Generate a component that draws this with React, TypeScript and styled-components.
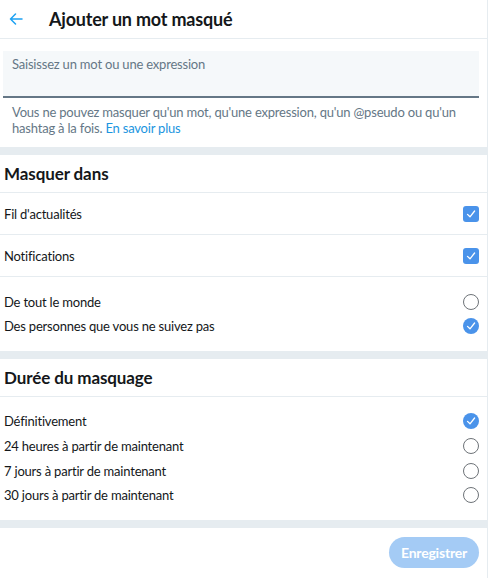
import React from 'react'
import styled, { createGlobalStyle } from 'styled-components'

const GlobalStyle = createGlobalStyle`
  body {
    margin: 0;
    background: #fff;
    font-family: Lato, 'Noto Sans', sans-serif;
    color: #14171a;
  }
`

const BLUE = '#4a93ea'

const Panel = styled.div`
  width: 487px;
  min-height: 578px;
  border-right: 1px solid #e6ecf0;
  background: #fff;
`

const Header = styled.div`
  display: flex;
  align-items: center;
  height: 38px;
  border-bottom: 1px solid #e6ecf0;
`

const BackButton = styled.div`
  width: 49px;
  display: flex;
  padding-left: 9px;
  box-sizing: border-box;
`

const Title = styled.h1`
  margin: 0;
  font-size: 18px;
  font-weight: 700;
  letter-spacing: -0.2px;
`

const InputSection = styled.div`
  height: 108px;
  box-sizing: border-box;
  padding: 12px 8px 0 3px;
`

const InputBox = styled.div`
  height: 47px;
  background: #f5f8fa;
  border-bottom: 2px solid #657786;
  padding: 5px 9px 0;
  box-sizing: border-box;
  font-size: 13px;
  letter-spacing: -0.2px;
  color: #657786;
  line-height: 16px;
`

const Help = styled.p`
  margin: 6px 0 0 9px;
  font-size: 13px;
  letter-spacing: -0.2px;
  line-height: 16px;
  color: #657786;

  a {
    color: #1b95e0;
    text-decoration: none;
  }
`

const Band = styled.div`
  height: 8px;
  background: #e6ecf0;
`

const SectionTitle = styled.h2`
  margin: 0;
  height: 37px;
  display: flex;
  align-items: center;
  padding-left: 4px;
  font-size: 17px;
  font-weight: 700;
  letter-spacing: -0.1px;
  border-bottom: 1px solid #e6ecf0;
`

const CheckRow = styled.div`
  height: 41px;
  display: flex;
  align-items: center;
  justify-content: space-between;
  padding: 0 8px 0 4px;
  border-bottom: 1px solid #e6ecf0;
  font-size: 13px;
  letter-spacing: -0.2px;
`

const RadioGroup = styled.div<{ $pad: number; $row: number }>`
  padding: ${p => p.$pad}px 0;

  & > div {
    height: ${p => p.$row}px;
  }
`

const RadioRow = styled.div`
  display: flex;
  align-items: center;
  justify-content: space-between;
  padding: 0 8px 0 4px;
  font-size: 13px;
  letter-spacing: -0.2px;
`

const Box = styled.span<{ $round?: boolean; $on?: boolean }>`
  width: 16px;
  height: 16px;
  flex: none;
  box-sizing: border-box;
  border-radius: ${p => (p.$round ? '50%' : '3px')};
  background: ${p => (p.$on ? BLUE : '#fff')};
  border: ${p => (p.$on ? 'none' : '1.5px solid #6e7378')};
  display: flex;
  align-items: center;
  justify-content: center;
`

const Footer = styled.div`
  display: flex;
  justify-content: flex-end;
  padding: 9px 8px 0 0;
`

const SaveButton = styled.button`
  width: 90px;
  height: 31px;
  border: none;
  border-radius: 16px;
  background: #a4cbf5;
  color: #fff;
  font-family: Lato, 'Noto Sans', sans-serif;
  font-weight: 700;
  font-size: 14px;
  letter-spacing: -0.2px;
`

const Tick = () => (
  <svg width="10" height="10" viewBox="0 0 10 10">
    <path d="M1.5 5.4 L4 7.8 L8.6 2" fill="none" stroke="#fff" strokeWidth="1.3" strokeLinecap="round" strokeLinejoin="round" />
  </svg>
)

const Control: React.FC<{ round?: boolean; on?: boolean }> = ({ round, on }) => (
  <Box $round={round} $on={on}>{on && <Tick />}</Box>
)

const durations = [
  { label: 'Définitivement', on: true },
  { label: '24 heures à partir de maintenant', on: false },
  { label: '7 jours à partir de maintenant', on: false },
  { label: '30 jours à partir de maintenant', on: false },
]

export default function App() {
  return (
    <Panel>
      <GlobalStyle />
      <Header>
        <BackButton>
          <svg width="14" height="12" viewBox="0 0 14 12">
            <path d="M13 6 H1.5 M6.5 1 L1.5 6 L6.5 11" fill="none" stroke="#1da1f2" strokeWidth="1.5" strokeLinecap="round" strokeLinejoin="round" />
          </svg>
        </BackButton>
        <Title>Ajouter un mot masqué</Title>
      </Header>

      <InputSection>
        <InputBox>Saisissez un mot ou une expression</InputBox>
        <Help>
          Vous ne pouvez masquer qu'un mot, qu'une expression, qu'un @pseudo ou qu'un hashtag à la fois.{' '}
          <a href="#">En savoir plus</a>
        </Help>
      </InputSection>
      <Band />

      <SectionTitle>Masquer dans</SectionTitle>
      <CheckRow>
        Fil d'actualités
        <Control on />
      </CheckRow>
      <CheckRow>
        Notifications
        <Control on />
      </CheckRow>
      <RadioGroup $pad={13} $row={24}>
        <RadioRow>
          De tout le monde
          <Control round />
        </RadioRow>
        <RadioRow>
          Des personnes que vous ne suivez pas
          <Control round on />
        </RadioRow>
      </RadioGroup>
      <Band />

      <SectionTitle>Durée du masquage</SectionTitle>
      <RadioGroup $pad={12} $row={24.7}>
        {durations.map(d => (
          <RadioRow key={d.label}>
            {d.label}
            <Control round on={d.on} />
          </RadioRow>
        ))}
      </RadioGroup>
      <Band />

      <Footer>
        <SaveButton>Enregistrer</SaveButton>
      </Footer>
    </Panel>
  )
}
